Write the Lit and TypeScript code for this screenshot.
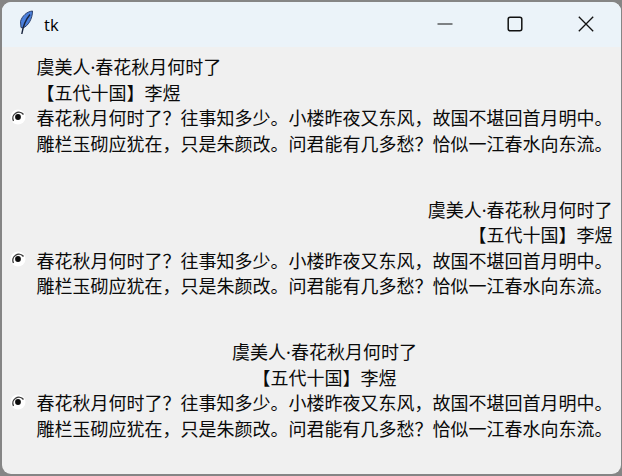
import { LitElement, html, css } from "lit";
import { customElement } from "lit/decorators.js";

const TITLE = "虞美人·春花秋月何时了";
const AUTHOR = "【五代十国】李煜";
const L1 = "春花秋月何时了\uFF1F往事知多少。小楼昨夜又东风\uFF0C故国不堪回首月明中。";
const L2 = "雕栏玉砌应犹在\uFF0C只是朱颜改。问君能有几多愁\uFF1F恰似一江春水向东流。";

@customElement("app-root")
export class AppRoot extends LitElement {
  static styles = css`
    :host { display: block; width: 622px; height: 476px; background: #858585; overflow: hidden; }
    .win { width: 619px; height: 472px; margin: 2px 1px 2px 2px; background: #f0f0f0; border-radius: 9px; overflow: hidden;
      display: flex; flex-direction: column; font-family: "Noto Sans", "Noto Sans CJK SC", sans-serif; color: #0a0a0a; }
    .bar { height: 45px; flex: none; background: #ebf3f9; display: flex; align-items: center; }
    .feather { margin: 0 0 3px 14px; width: 20px; height: 26px; flex: none; }
    .name { margin-left: 8px; font: 16.5px "Open Sans", "Noto Sans", sans-serif; color: #000; flex: 1; }
    .ctl { width: 70px; height: 45px; padding-bottom: 2px; box-sizing: border-box; display: flex; align-items: center; justify-content: center; flex: none; }
    .ctl.close { width: 71px; }
    .ctl svg { width: 16px; height: 16px; }
    .rows { display: flex; flex-direction: column; gap: 40px; padding: 8px 8.5px 0 0; }
    .row { display: flex; align-items: flex-start; height: 102.5px; }
    .radio-col { width: 34.5px; flex: none; padding-top: 53.5px; display: flex; justify-content: flex-end; }
    .radio { width: 16px; height: 16px; margin-right: 10.5px; flex: none; }
    .text { flex: 1; font-size: 18px; line-height: 25.6px; white-space: nowrap; }
    .left { text-align: left; } .right { text-align: right; } .center { text-align: center; }
  `;

  private radio() {
    return html`<svg class="radio" viewBox="0 0 16 16">
      <circle cx="8" cy="8" r="7.500" fill="#fff"/>
      <path d="M3.500 12A6 6 0 0 1 13.500 5.500" fill="none" stroke="#3c3c3c" stroke-width="1.400"/>
      <circle cx="8" cy="8" r="2.900" fill="#0c0c0c"/>
    </svg>`;
  }

  private row(align: string) {
    return html`<div class="row">
      <div class="radio-col">${this.radio()}</div>
      <div class="text">
        <div class=${align}>${TITLE}</div>
        <div class=${align}>${AUTHOR}</div>
        <div>${L1}</div>
        <div>${L2}</div>
      </div>
    </div>`;
  }

  render() {
    return html`<div class="win">
      <div class="bar">
        <svg class="feather" viewBox="0 0 20 26">
          <path d="M16.500 1C11 1.500 6 6 4.500 11.500L5 17.500l2 .5C12 16 16.500 9 16.500 1Z" fill="#4a7fdc" stroke="#2b3f6a" stroke-width="1"/>
          <path d="M14 4.500C11 8 7.500 13 5.800 24" fill="none" stroke="#18233c" stroke-width="1.400"/>
        </svg>
        <div class="name">tk</div>
        <div class="ctl"><svg viewBox="0 0 16 16"><path d="M.5 8h15" stroke="#111" stroke-width="1.200"/></svg></div>
        <div class="ctl"><svg viewBox="0 0 16 16"><rect x="1.200" y="1.200" width="13.600" height="13.600" rx="2" fill="none" stroke="#111" stroke-width="1.500"/></svg></div>
        <div class="ctl close"><svg viewBox="0 0 16 16"><path d="M.8.8l14.400 14.400M15.200.8L.8 15.200" stroke="#111" stroke-width="1.300"/></svg></div>
      </div>
      <div class="rows">
        ${this.row("left")}
        ${this.row("right")}
        ${this.row("center")}
      </div>
    </div>`;
  }
}
